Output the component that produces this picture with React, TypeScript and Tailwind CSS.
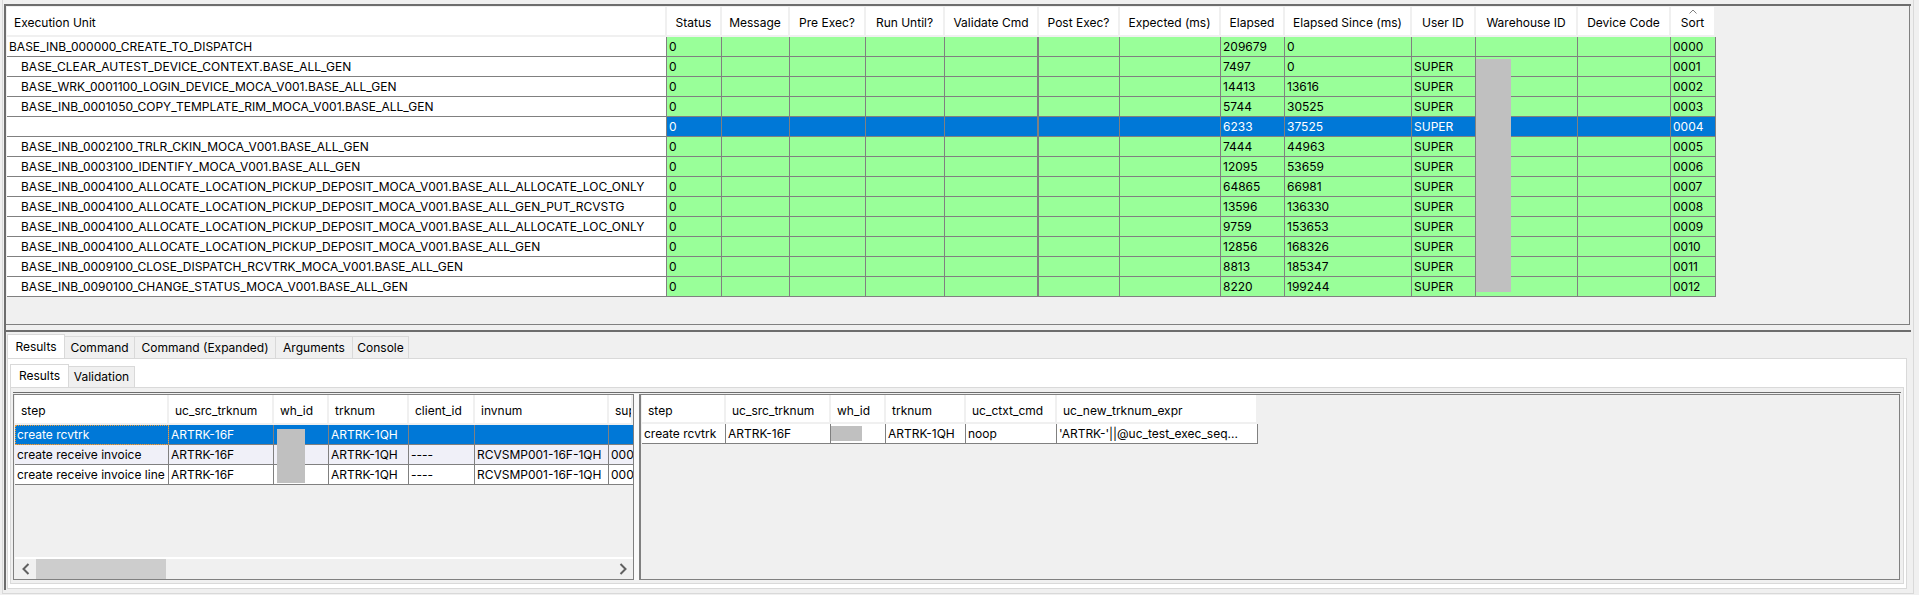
const exec = [
  ["BASE_INB_000000_CREATE_TO_DISPATCH", "209679", "0", "", "0000"],
  ["BASE_CLEAR_AUTEST_DEVICE_CONTEXT.BASE_ALL_GEN", "7497", "0", "SUPER", "0001"],
  ["BASE_WRK_0001100_LOGIN_DEVICE_MOCA_V001.BASE_ALL_GEN", "14413", "13616", "SUPER", "0002"],
  ["BASE_INB_0001050_COPY_TEMPLATE_RIM_MOCA_V001.BASE_ALL_GEN", "5744", "30525", "SUPER", "0003"],
  ["", "6233", "37525", "SUPER", "0004"],
  ["BASE_INB_0002100_TRLR_CKIN_MOCA_V001.BASE_ALL_GEN", "7444", "44963", "SUPER", "0005"],
  ["BASE_INB_0003100_IDENTIFY_MOCA_V001.BASE_ALL_GEN", "12095", "53659", "SUPER", "0006"],
  ["BASE_INB_0004100_ALLOCATE_LOCATION_PICKUP_DEPOSIT_MOCA_V001.BASE_ALL_ALLOCATE_LOC_ONLY", "64865", "66981", "SUPER", "0007"],
  ["BASE_INB_0004100_ALLOCATE_LOCATION_PICKUP_DEPOSIT_MOCA_V001.BASE_ALL_GEN_PUT_RCVSTG", "13596", "136330", "SUPER", "0008"],
  ["BASE_INB_0004100_ALLOCATE_LOCATION_PICKUP_DEPOSIT_MOCA_V001.BASE_ALL_ALLOCATE_LOC_ONLY", "9759", "153653", "SUPER", "0009"],
  ["BASE_INB_0004100_ALLOCATE_LOCATION_PICKUP_DEPOSIT_MOCA_V001.BASE_ALL_GEN", "12856", "168326", "SUPER", "0010"],
  ["BASE_INB_0009100_CLOSE_DISPATCH_RCVTRK_MOCA_V001.BASE_ALL_GEN", "8813", "185347", "SUPER", "0011"],
  ["BASE_INB_0090100_CHANGE_STATUS_MOCA_V001.BASE_ALL_GEN", "8220", "199244", "SUPER", "0012"],
];

const execHeaders = ["Status", "Message", "Pre Exec?", "Run Until?", "Validate Cmd", "Post Exec?", "Expected (ms)", "Elapsed", "Elapsed Since (ms)", "User ID", "Warehouse ID", "Device Code", "Sort"];

const execCols = "grid w-[1709px] grid-cols-[660px_55px_68px_76px_79px_94px_81px_101px_64px_127px_64px_102px_93px_45px]";
const leftCols = "grid w-[618px] grid-cols-[154px_105px_55px_80px_66px_134px_24px]";
const rightCols = "grid w-[616px] grid-cols-[84px_105px_55px_80px_91px_201px]";

function Tab({ label, active, className }: { label: string; active?: boolean; className: string }) {
  return active ? (
    <div className={`flex items-center justify-center border border-b-0 border-[#d9d9d9] bg-white ${className}`}>{label}</div>
  ) : (
    <div className={`flex items-center justify-center border border-b-0 border-l-0 border-[#d9d9d9] bg-[#f0f0f0] ${className}`}>{label}</div>
  );
}

function Head({ label, className = "" }: { label: string; className?: string }) {
  return <div className={`flex items-center overflow-hidden whitespace-nowrap border-r-2 border-b-2 border-[#f0f0f0] bg-white ${className}`}>{label}</div>;
}

function Cell({ children, className = "" }: { children?: React.ReactNode; className?: string }) {
  return <div className={`h-[20px] overflow-hidden whitespace-nowrap border-r border-b border-[#808080] pl-[2px] leading-[20px] ${className}`}>{children}</div>;
}

function Arrow({ left }: { left?: boolean }) {
  return (
    <svg width="8" height="12" viewBox="0 0 8 12" fill="none" stroke="#606060" strokeWidth="2">
      <path d={left ? "M6.5 1 L1.5 6 L6.5 11" : "M1.5 1 L6.5 6 L1.5 11"} />
    </svg>
  );
}

export default function App() {
  return (
    <div className="h-[595px] w-[1919px] overflow-hidden bg-[#f0f0f0] pl-[2px] font-['Inter',sans-serif] text-[12px] text-black">
      <div className="h-[594px] w-[1912px] border-r border-b border-l border-[#d9d9d9] pt-[4px] pl-px">
        <div className="h-[586px] w-[1907px] border-t-2 border-l-2 border-[#6d6d6d]">
          {/* top execution table */}
          <div className="h-[319px] w-[1904px] border-r border-b border-[#808080] pl-px pt-px">
            <div className="relative">
              <div className={`${execCols} h-[30px]`}>
                <Head label="Execution Unit" className="pt-[4px] pl-[7px]" />
                {execHeaders.map((h) => (
                  <Head key={h} label={h} className="justify-center pt-[4px]" />
                ))}
              </div>
              {exec.map((row, i) => {
                const sel = i === 4;
                const bg = sel ? "bg-[#0078d7] text-white" : "bg-[#99ff99]";
                return (
                  <div key={row[4]} className={execCols}>
                    <Cell className={`bg-white ${i === 0 ? "pl-0" : "pl-[14px]"}`}>{row[0]}</Cell>
                    <Cell className={bg}>0</Cell>
                    <Cell className={bg} />
                    <Cell className={bg} />
                    <Cell className={bg} />
                    <Cell className={`${bg} border-r-2`} />
                    <Cell className={bg} />
                    <Cell className={bg} />
                    <Cell className={bg}>{row[1]}</Cell>
                    <Cell className={bg}>{row[2]}</Cell>
                    <Cell className={bg}>{row[3]}</Cell>
                    <Cell className={bg} />
                    <Cell className={bg} />
                    <Cell className={bg}>{row[4]}</Cell>
                  </div>
                );
              })}
              <svg className="absolute top-[2px] left-[1682px]" width="8" height="5" viewBox="0 0 8 5" fill="none" stroke="#808080">
                <path d="M0.5 4.5 L4 1 L7.5 4.5" />
              </svg>
              <div className="absolute top-[52px] left-[1469px] h-[233px] w-[35px] bg-[#c0c0c0]" />
            </div>
          </div>

          {/* splitter */}
          <div className="mt-[5px] h-[2px] w-[1905px] bg-[#6d6d6d]" />

          {/* bottom tabbed area */}
          <div className="w-[1901px] pt-[2px] pl-[1px]">
            <div className="flex h-[24px] items-end">
              <Tab label="Results" active className="h-[24px] w-[58px]" />
              <Tab label="Command" className="h-[22px] w-[70px]" />
              <Tab label="Command (Expanded)" className="h-[22px] w-[141px]" />
              <Tab label="Arguments" className="h-[22px] w-[77px]" />
              <Tab label="Console" className="h-[22px] w-[56px]" />
            </div>
            <div className="h-[231px] border border-[#d9d9d9] bg-white px-[2px] pt-[5px]">
              <div className="flex h-[23px] items-end">
                <Tab label="Results" active className="h-[23px] w-[59px]" />
                <Tab label="Validation" className="h-[21px] w-[66px]" />
              </div>
              <div className="h-[197px] border border-[#d9d9d9] bg-[#f0f0f0] pt-[4px] pl-[2px]">
                <div className="h-px w-[1888px] bg-[#6d6d6d]" />
                <div className="mt-px flex">
                  {/* left results grid */}
                  <div className="h-[186px] w-[621px] border border-[#808080]">
                    <div className="relative flex h-[184px] flex-col pl-px">
                      <div className={`${leftCols} h-[30px]`}>
                        {["step", "uc_src_trknum", "wh_id", "trknum", "client_id", "invnum", "sup"].map((h) => (
                          <Head key={h} label={h} className="pt-[4px] pl-[6px]" />
                        ))}
                      </div>
                      {[
                        ["create rcvtrk", "", ""],
                        ["create receive invoice", "----", "RCVSMP001-16F-1QH"],
                        ["create receive invoice line", "----", "RCVSMP001-16F-1QH"],
                      ].map((r, i) => {
                        const bg = i === 0 ? "bg-[#0078d7] text-white" : i === 1 ? "bg-[#f0f0f8]" : "bg-white";
                        return (
                          <div key={r[0]} className={leftCols}>
                            <Cell className={`${bg} ${i === 0 ? "outline-1 -outline-offset-1 outline-dotted outline-[#e8a040]" : ""}`}>{r[0]}</Cell>
                            <Cell className={bg}>ARTRK-16F</Cell>
                            <Cell className={bg} />
                            <Cell className={bg}>ARTRK-1QH</Cell>
                            <Cell className={bg}>{r[1]}</Cell>
                            <Cell className={bg}>{r[2]}</Cell>
                            <Cell className={`${bg} border-r-0`}>{i > 0 ? "000" : ""}</Cell>
                          </div>
                        );
                      })}
                      <div className="absolute top-[34px] left-[263px] h-[54px] w-[28px] bg-[#c0c0c0]" />
                      {/* scrollbar */}
                      <div className="mt-auto flex h-[22px] items-center border-t-2 border-white bg-[#f0f0f0]">
                        <div className="flex w-[21px] justify-center"><Arrow left /></div>
                        <div className="h-[20px] w-[130px] bg-[#cdcdcd]" />
                        <div className="flex-1" />
                        <div className="flex w-[21px] justify-center"><Arrow /></div>
                      </div>
                    </div>
                  </div>
                  {/* pane divider */}
                  <div className="h-[186px] w-[5px] bg-[#fafafa]" />
                  {/* right results grid */}
                  <div className="h-[186px] w-[1261px] border border-l-2 border-[#808080]">
                    <div className="relative pl-px">
                      <div className={`${rightCols} h-[29px]`}>
                        {["step", "uc_src_trknum", "wh_id", "trknum", "uc_ctxt_cmd", "uc_new_trknum_expr"].map((h) => (
                          <Head key={h} label={h} className="pt-[4px] pl-[6px]" />
                        ))}
                      </div>
                      <div className={rightCols}>
                        <Cell className="bg-white">create rcvtrk</Cell>
                        <Cell className="bg-white">ARTRK-16F</Cell>
                        <Cell className="bg-white" />
                        <Cell className="bg-white">ARTRK-1QH</Cell>
                        <Cell className="bg-white">noop</Cell>
                        <Cell className="bg-white">'ARTRK-'||@uc_test_exec_seq...</Cell>
                      </div>
                      <div className="absolute top-[31px] left-[190px] h-[15px] w-[31px] bg-[#c0c0c0]" />
                    </div>
                  </div>
                </div>
              </div>
            </div>
          </div>
        </div>
      </div>
    </div>
  );
}
